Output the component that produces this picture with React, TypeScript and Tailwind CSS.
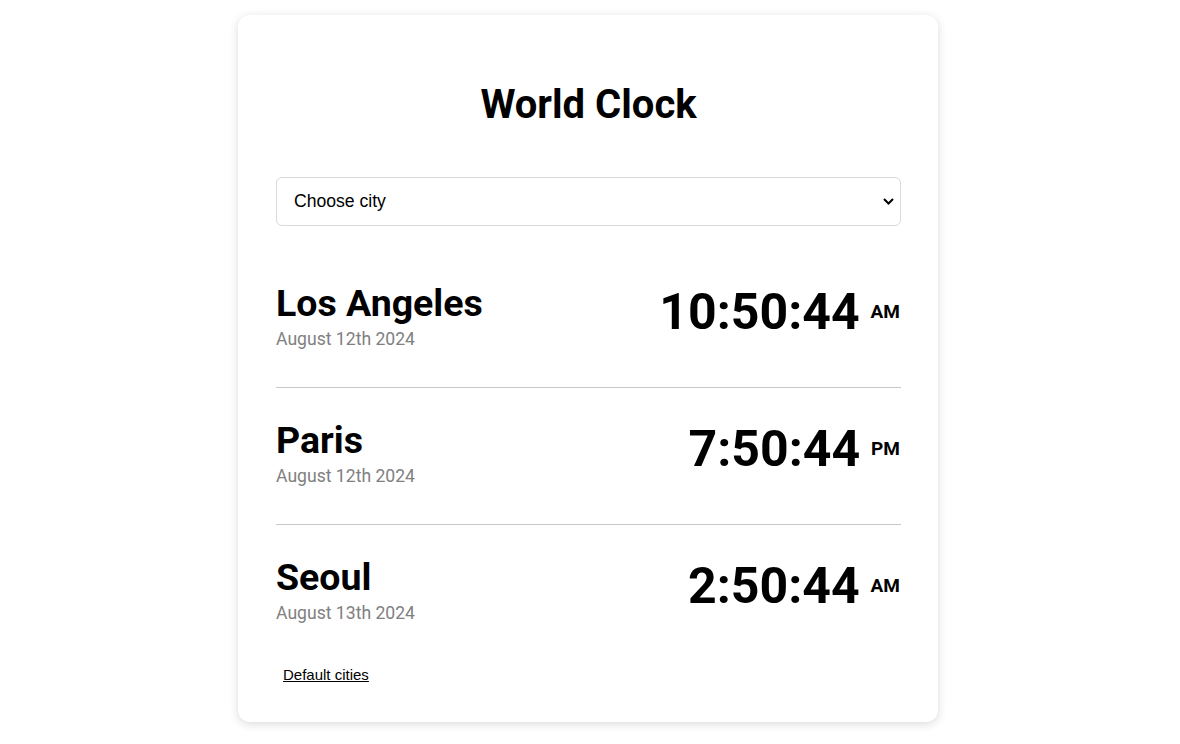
import React from 'react';

const cities = [
  { name: 'Los Angeles', date: 'August 12th 2024', time: '10:50:44', ampm: 'AM' },
  { name: 'Paris', date: 'August 12th 2024', time: '7:50:44', ampm: 'PM' },
  { name: 'Seoul', date: 'August 13th 2024', time: '2:50:44', ampm: 'AM' },
];

export default function App() {
  return (
    <div className="min-h-screen bg-white flex justify-center pt-[15px] pr-[4px]" style={{ fontFamily: 'Roboto, sans-serif' }}>
      <div className="w-[700px] h-[707px] bg-white rounded-[12px] shadow-[0_2px_10px_rgba(0,0,0,0.15)] pl-[38px] pr-[37px] pt-[70px]">
        <h1 className="text-center text-[40px] font-bold leading-none text-black">World Clock</h1>
        <div className="mt-[52px] relative">
          <select
            className="w-full h-[49px] border border-[#d9d9d9] rounded-[6px] pl-[17px] pr-[12px] text-[17.6px] text-black bg-white appearance-none"
            style={{ fontFamily: '"Liberation Sans", Arial, sans-serif' }}
          >
            <option>Choose city</option>
          </select>
          <svg className="absolute right-[7px] top-[21px] pointer-events-none" width="11" height="7" viewBox="0 0 11 7" fill="none">
            <path d="M1 1l4.5 4.5L10 1" stroke="black" strokeWidth="2" />
          </svg>
        </div>
        <div className="mt-[25px]">
          {cities.map((c, i) => (
            <div
              key={c.name}
              className={`flex items-start justify-between h-[137px] ${i < cities.length - 1 ? 'border-b border-[#c8c8c8]' : ''}`}
            >
              <div className="pt-[32px]">
                <div className="text-[37.5px] font-bold leading-[40px] text-black">{c.name}</div>
                <div className="text-[17.6px] leading-[22px] text-[#808080] mt-[5px]">{c.date}</div>
              </div>
              <div className="flex items-center pt-[36px] pr-[1px]">
                <span className="text-[50px] font-bold leading-none text-black">{c.time}</span>
                <span className="text-[19px] font-bold ml-[11px] text-black">{c.ampm}</span>
              </div>
            </div>
          ))}
        </div>
        <button
          className="mt-[2px] ml-[7px] text-[15px] underline text-black"
          style={{ fontFamily: '"Liberation Sans", Arial, sans-serif' }}
        >
          Default cities
        </button>
      </div>
    </div>
  );
}
